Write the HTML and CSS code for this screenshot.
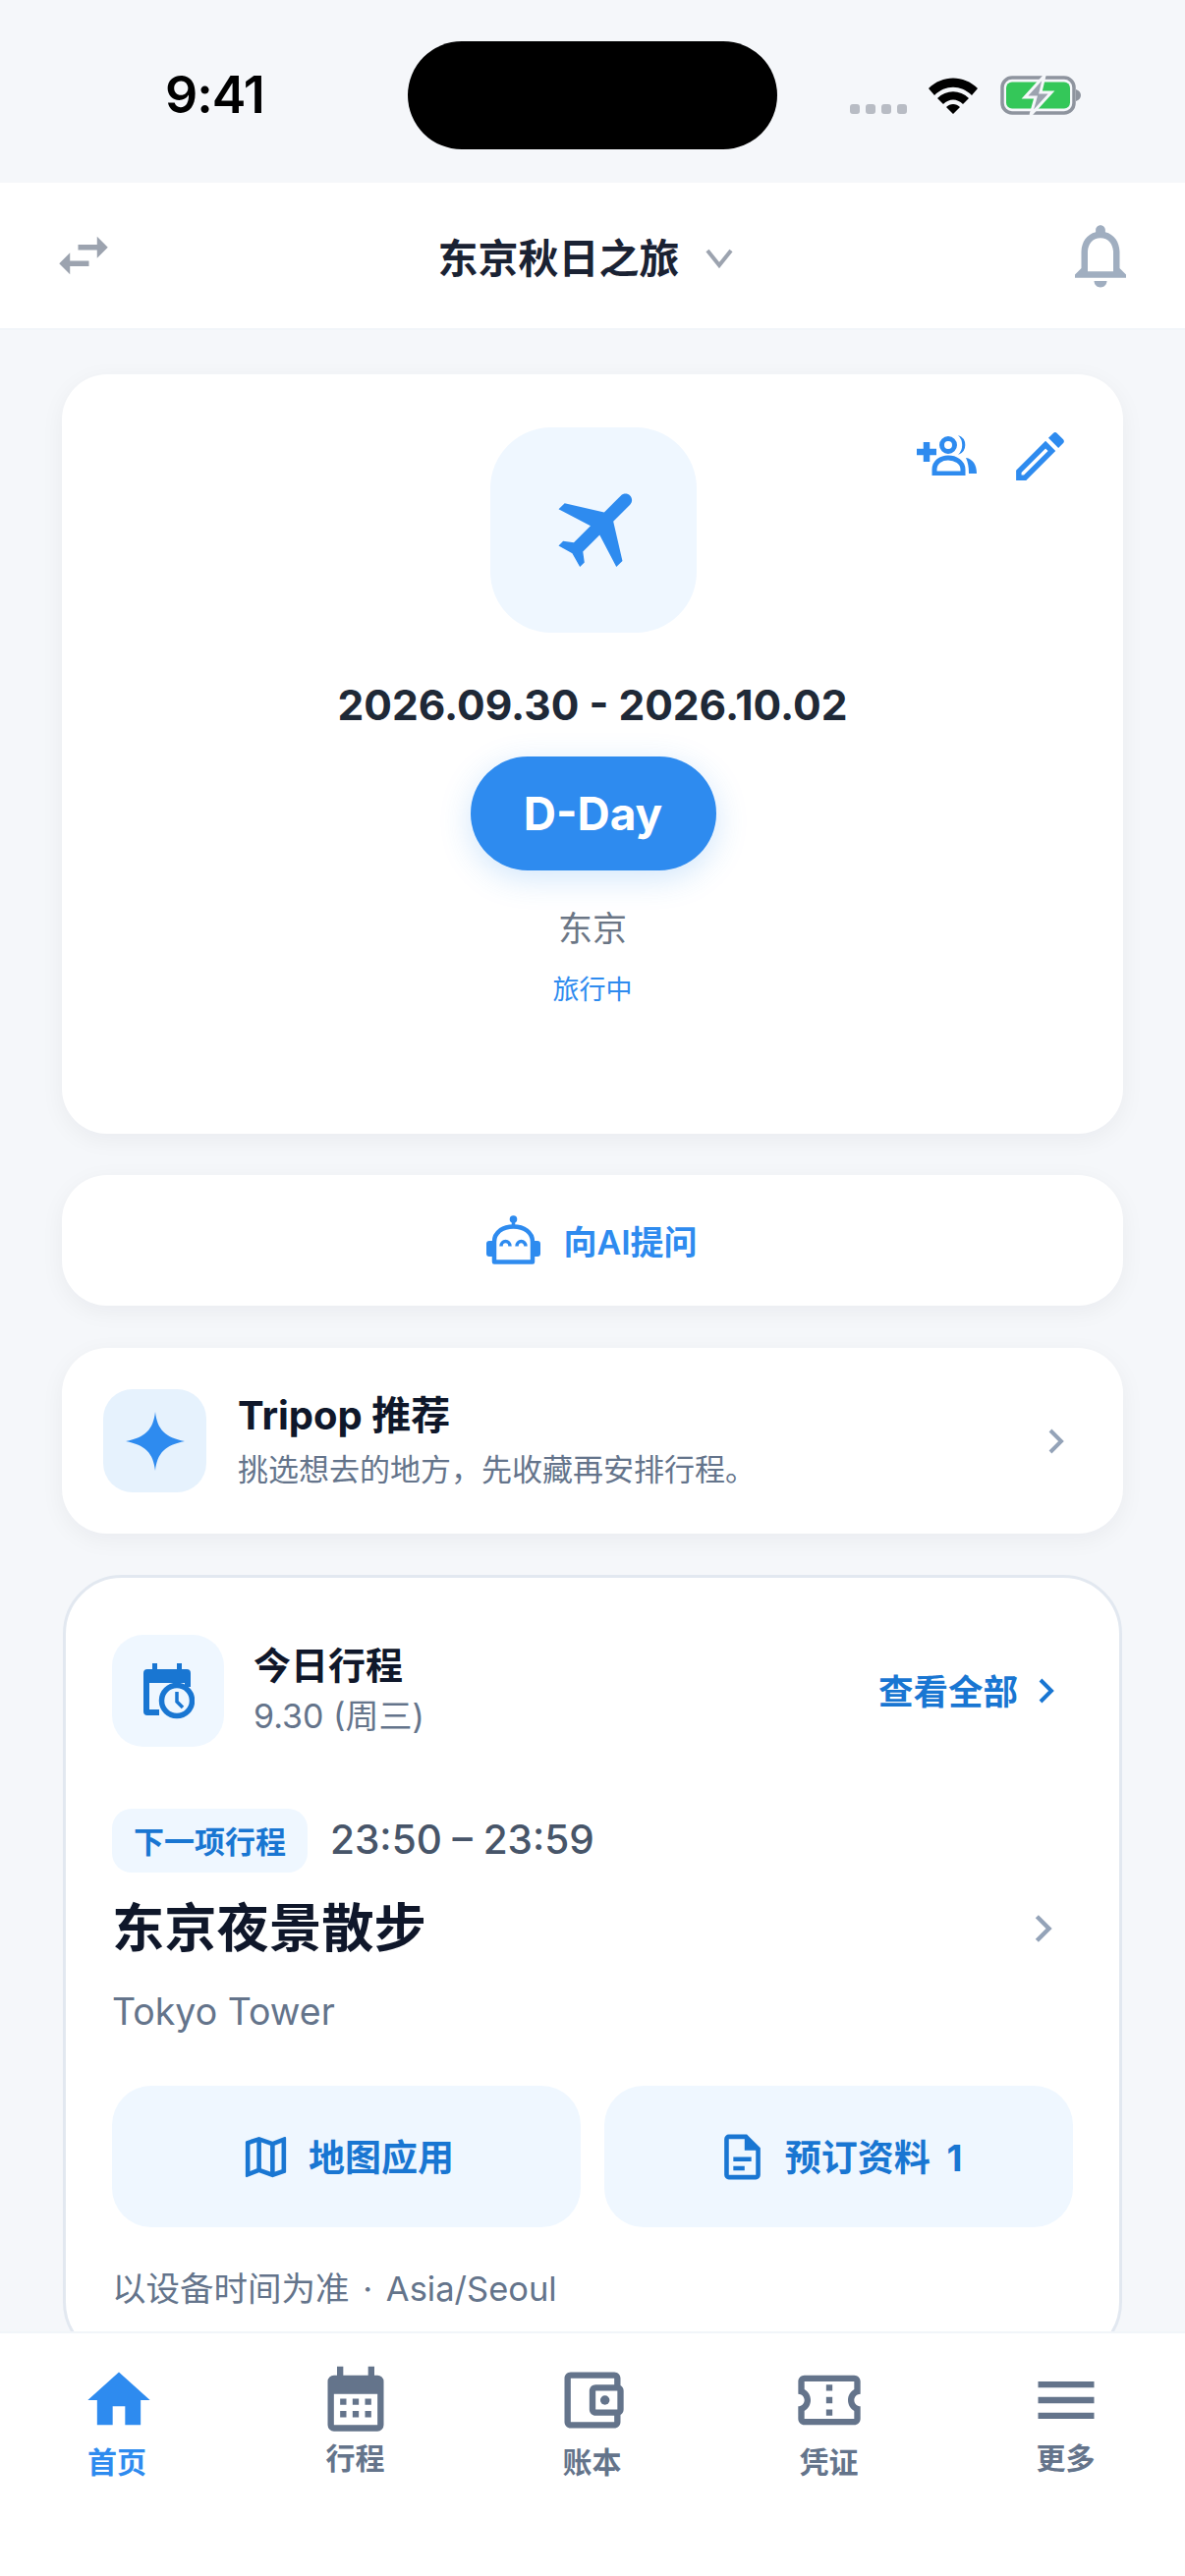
FILE: index.html
```html
<!DOCTYPE html>
<html lang="zh">
<head>
    <meta charset="utf-8">
    <title>Tripop</title>
    <link rel="stylesheet" href="styles.css">
</head>
<body>
<div class="phone">
    <div class="statusbar">
        <span class="clock">9:41</span>
        <span class="island"></span>
        <div class="status-icons">
            <span class="dots"><i></i><i></i><i></i><i></i></span>
            <svg class="wifi" viewBox="0 0 50 37"><path d="M0 11C14-3 36-3 50 11L44 18C33 7 17 7 6 18ZM9 21C18 12 32 12 41 21L35 27C29 21 21 21 15 27ZM18 30C22 26 28 26 32 30L25 37Z"/></svg>
            <svg class="battery" viewBox="0 0 82 40">
                <rect x="2" y="2" width="73" height="36" rx="10" fill="none" stroke="#8e949e" stroke-width="3.5"/>
                <rect x="6" y="6.500" width="65" height="27" rx="6" fill="#34c759"/>
                <path d="M77 14c3 1 5 3 5 6s-2 5-5 6z" fill="#8e949e"/>
                <path d="M45 0 25 22h11l-5 18 21-23H41z" fill="#9ca3af" stroke="#f5f7fa" stroke-width="3"/>
            </svg>
        </div>
    </div>

    <header class="topbar">
        <svg class="swap" viewBox="0 0 24 24"><path d="M6.99 11L3 15l3.99 4v-3H14v-2H6.99v-3zM21 9l-3.99-4v3H10v2h7.01v3L21 9z"/></svg>
        <div class="trip-select">
            <span class="trip-name">东京秋日之旅</span>
            <svg class="caret" viewBox="0 0 28 20"><path d="M2 2l12 15L26 2" fill="none" stroke="#9ca3af" stroke-width="4"/></svg>
        </div>
        <svg class="bell" viewBox="0 0 24 24"><path d="M12 22c1.100 0 2-.9 2-2h-4c0 1.100.9 2 2 2zm6-6v-5c0-3.070-1.630-5.640-4.500-6.320V4c0-.83-.67-1.500-1.500-1.500s-1.500.67-1.500 1.500v.68C7.640 5.360 6 7.920 6 11v5l-2 2v1h16v-1l-2-2zm-2 1H8v-6c0-2.480 1.510-4.500 4-4.500s4 2.020 4 4.500v6z"/></svg>
    </header>

    <main class="content">
        <section class="card hero">
            <div class="hero-actions">
                <svg class="add-member" viewBox="0 0 66 42">
                    <path d="M3 18h20M13 8v20" stroke="#2e8bef" stroke-width="6.500" fill="none"/>
                    <circle cx="35" cy="11" r="6.500" fill="none" stroke="#2e8bef" stroke-width="5"/>
                    <path d="M45 1a10.500 10.500 0 0 1 0 20 14 14 0 0 0 0-20z" fill="#2e8bef"/>
                    <path d="M21 40V36C21 28 28 24 35 24S50 28 50 36V40z" fill="none" stroke="#2e8bef" stroke-width="5"/>
                    <path d="M53 24C60 25 64 31 64 40H56C56 33 55 28 53 24z" fill="#2e8bef"/>
                </svg>
                <svg class="edit" viewBox="0 0 24 24"><path d="M3 17.250V21h3.750L17.810 9.940l-3.750-3.750L3 17.250zM5.920 19H5v-.92l9.060-9.060.92.92L5.920 19zM20.710 5.630l-2.340-2.340c-.39-.39-1.020-.39-1.410 0l-1.830 1.830 3.750 3.750 1.830-1.830c.39-.39.39-1.020 0-1.410z"/></svg>
            </div>
            <div class="hero-icon">
                <svg viewBox="0 0 24 24"><path transform="translate(1.900 -0.600) rotate(45 12 12)" d="M21 16v-2l-8-5V3.500c0-.83-.67-1.500-1.500-1.500S10 2.670 10 3.500V9l-8 5v2l8-2.500V19l-2 1.500V22l3.500-1 3.500 1v-1.500L13 19v-5.500l8 2.500z"/></svg>
            </div>
            <div class="hero-dates">2026.09.30 - 2026.10.02</div>
            <div class="dday">D-Day</div>
            <div class="hero-city">东京</div>
            <div class="hero-state">旅行中</div>
        </section>

        <section class="card ask">
            <svg class="robot" viewBox="0 0 57 50">
                <circle cx="28.500" cy="4" r="3.800" fill="#2e8bef"/>
                <path d="M28.500 6v6" stroke="#2e8bef" stroke-width="3.500"/>
                <path d="M9 27C9 17 18 11.500 28.500 11.500S48 17 48 27V47.500H9z" fill="none" stroke="#2e8bef" stroke-width="4.500" stroke-linejoin="round"/>
                <path d="M9 26H4a3 3 0 0 0-3 3v10a3 3 0 0 0 3 3h5zM48 26h5a3 3 0 0 1 3 3v10a3 3 0 0 1-3 3h-5z" fill="#2e8bef"/>
                <path d="M16 31.500a4.500 5 0 0 1 9 0M32 31.500a4.500 5 0 0 1 9 0" fill="none" stroke="#2e8bef" stroke-width="3.500"/>
            </svg>
            <span class="ask-label">向AI提问</span>
        </section>

        <section class="card picks">
            <div class="picks-icon">
                <svg viewBox="0 0 60 60"><path d="M30 0C32 18 40 26 60 30 40 34 32 42 30 60 28 42 20 34 0 30 20 26 28 18 30 0Z"/></svg>
            </div>
            <div class="picks-text">
                <div class="picks-title">Tripop 推荐</div>
                <div class="picks-sub">挑选想去的地方，先收藏再安排行程。</div>
            </div>
            <svg class="chevron picks-more" viewBox="0 0 18 28"><path d="M3 3l11 11L3 25"/></svg>
        </section>

        <section class="card today">
            <div class="today-head">
                <div class="today-icon">
                    <svg viewBox="0 0 52 58">
                        <path d="M4 7h5V1h5v6h20V1h5v6h5a4 4 0 0 1 4 4v14h-6V21H6v27h10v6H4a4 4 0 0 1-4-4V11a4 4 0 0 1 4-4z" fill="#1976d2"/>
                        <circle cx="34" cy="39" r="15.500" fill="#eff7ff" stroke="#1976d2" stroke-width="5.500"/>
                        <path d="M34 30v10l6 6" fill="none" stroke="#1976d2" stroke-width="3.500"/>
                    </svg>
                </div>
                <div class="today-text">
                    <div class="today-title">今日行程</div>
                    <div class="today-date">9.30 (周三)</div>
                </div>
                <div class="see-all">
                    <span>查看全部</span>
                    <svg class="chevron" viewBox="0 0 18 28"><path d="M3 3l11 11L3 25"/></svg>
                </div>
            </div>

            <div class="next-row">
                <span class="next-badge">下一项行程</span>
                <span class="next-time">23:50 – 23:59</span>
            </div>
            <div class="event-row">
                <h2 class="event-title">东京夜景散步</h2>
                <svg class="chevron event-more" viewBox="0 0 18 28"><path d="M3 3l11 11L3 25"/></svg>
            </div>
            <div class="event-place">Tokyo Tower</div>

            <div class="event-buttons">
                <div class="event-button">
                    <svg viewBox="0 0 24 24"><path d="M20.500 3l-.16.03L15 5.100 9 3 3.360 4.900c-.21.07-.36.25-.36.48V20.500c0 .28.22.5.5.5l.16-.03L9 18.900l6 2.100 5.640-1.900c.21-.07.36-.25.36-.48V3.500c0-.28-.22-.5-.5-.5zM10 5.470l4 1.400v11.660l-4-1.400V5.470zm-5 .99l3-1.010v11.700l-3 1.160V6.460zm14 11.080l-3 1.010V6.860l3-1.160v11.840z"/></svg>
                    <span>地图应用</span>
                </div>
                <div class="event-button">
                    <svg viewBox="0 0 24 24"><path fill-rule="evenodd" d="M14 2H6a2 2 0 0 0-2 2v16a2 2 0 0 0 2 2h12a2 2 0 0 0 2-2V8zM6 4h7v5h5v11H6z"/><path d="M8 12h8v2H8zM8 16h5v2H8z"/></svg>
                    <span>预订资料 1</span>
                </div>
            </div>
            <div class="today-note">以设备时间为准 · Asia/Seoul</div>
        </section>
    </main>

    <nav class="tabbar">
        <div class="tab active">
            <svg viewBox="0 0 24 24"><path d="M10 20v-6h4v6h5v-8h3L12 3 2 12h3v8z"/></svg>
            <span>首页</span>
        </div>
        <div class="tab tight">
            <svg viewBox="0 0 24 24"><path fill-rule="evenodd" d="M19 4h-1V1.200h-2V4H8V1.200H6V4H5a2 2 0 0 0-2 2v14a2 2 0 0 0 2 2h14a2 2 0 0 0 2-2V6a2 2 0 0 0-2-2zM5 10h14v10H5z"/><path d="M7 11.500h2v2H7zM11 11.500h2v2h-2zM15 11.500h2v2h-2zM7 15.500h2v2H7zM11 15.500h2v2h-2zM15 15.500h2v2h-2z"/></svg>
            <span>行程</span>
        </div>
        <div class="tab">
            <svg viewBox="0 0 24 24"><path d="M21 7.280V5c0-1.100-.9-2-2-2H5c-1.110 0-2 .9-2 2v14c0 1.100.89 2 2 2h14c1.100 0 2-.9 2-2v-2.280c.59-.35 1-.98 1-1.720V9c0-.74-.41-1.380-1-1.720zM20 9v6h-7V9h7zM5 19V5h14v2h-6c-1.100 0-2 .9-2 2v6c0 1.100.9 2 2 2h6v2H5z"/><circle cx="16" cy="12" r="1.500"/></svg>
            <span>账本</span>
        </div>
        <div class="tab">
            <svg viewBox="0 0 24 24"><path d="M22 10V6c0-1.110-.9-2-2-2H4c-1.100 0-1.990.89-1.990 2v4c1.100 0 1.990.9 1.990 2s-.89 2-2 2v4c0 1.100.9 2 2 2h16c1.100 0 2-.9 2-2v-4c-1.100 0-2-.9-2-2s.9-2 2-2zm-2-1.460c-1.190.69-2 1.990-2 3.460s.81 2.770 2 3.460V18H4v-2.540c1.190-.69 2-1.990 2-3.460 0-1.480-.8-2.770-1.990-3.460L4 6h16v2.540zM11 15h2v2h-2zm0-4h2v2h-2zm0-4h2v2h-2z"/></svg>
            <span>凭证</span>
        </div>
        <div class="tab tight">
            <svg viewBox="0 0 24 24"><path d="M3 18h18v-2H3v2zm0-5h18v-2H3v2zm0-7v2h18V6H3z"/></svg>
            <span>更多</span>
        </div>
    </nav>
</div>
</body>
</html>
```

FILE: styles.css
```css
* {
    box-sizing: border-box;
}

html, body {
    margin: 0;
    padding: 0;
}

body {
    font-family: Inter, "Noto Sans CJK SC", sans-serif;
    background: #f5f7fa;
    color: #0f172a;
}

svg {
    display: block;
    flex: none;
}

.phone {
    width: 1206px;
    height: 2622px;
    display: flex;
    flex-direction: column;
    overflow: hidden;
}

/* status bar */
.statusbar {
    height: 186px;
    flex: none;
    display: flex;
    padding-left: 168px;
    align-items: flex-start;
}

.clock {
    width: 247px;
    margin-top: 67px;
    font-size: 52px;
    line-height: 60px;
    font-weight: 600;
    letter-spacing: -1px;
    color: #000;
}

.island {
    width: 376px;
    height: 110px;
    margin-top: 42px;
    border-radius: 55px;
    background: #000;
}

.status-icons {
    display: flex;
    align-items: flex-end;
    height: 39px;
    margin-top: 78px;
    margin-left: 74px;
}

.dots {
    display: flex;
    gap: 6px;
    margin-bottom: 1px;
}

.dots i {
    width: 10px;
    height: 10px;
    border-radius: 3px;
    background: #b8bcc4;
}

.wifi {
    width: 50px;
    height: 37px;
    margin-left: 22px;
    margin-bottom: 1px;
}

.battery {
    width: 82px;
    height: 40px;
    margin-left: 23px;
}

/* top bar */
.topbar {
    height: 150px;
    flex: none;
    display: flex;
    align-items: center;
    justify-content: space-between;
    padding: 0 47px 0 52px;
    background: #fff;
    border-bottom: 2px solid #f1f5f9;
}

.swap {
    width: 66px;
    height: 66px;
    fill: #9ca3af;
}

.bell {
    width: 78px;
    height: 78px;
    fill: #a0aec0;
}

.trip-select {
    display: flex;
    align-items: center;
    gap: 26px;
    margin-right: 8px;
    margin-top: 5px;
}

.trip-name {
    font-size: 41px;
    font-weight: 700;
    line-height: 56px;
    color: #1a2233;
}

.caret {
    width: 28px;
    height: 20px;
}

/* cards */
.content {
    flex: 1;
    min-height: 0;
    overflow: hidden;
    padding: 45px 63px 0;
    display: flex;
    flex-direction: column;
    gap: 42px;
}

.card {
    flex: none;
    background: #fff;
    border-radius: 46px;
    box-shadow: 0 6px 24px rgba(15, 23, 42, 0.05);
}

.hero {
    position: relative;
    height: 773px;
    padding-top: 54px;
    display: flex;
    flex-direction: column;
    align-items: center;
}

.hero-actions {
    position: absolute;
    top: 51px;
    right: 52px;
    display: flex;
    align-items: center;
    gap: 30px;
}

.add-member {
    width: 66px;
    height: 42px;
    margin-top: -3px;
}

.edit {
    width: 65px;
    height: 65px;
    fill: #2e8bef;
}

.hero-icon {
    width: 210px;
    height: 209px;
    margin-left: 1px;
    border-radius: 62px;
    background: #eff7ff;
    display: flex;
    align-items: center;
    justify-content: center;
}

.hero-icon svg {
    width: 105px;
    height: 105px;
    fill: #2e8bef;
}

.hero-dates {
    margin-top: 45px;
    font-size: 42.500px;
    line-height: 58px;
    font-weight: 700;
    color: #1f2937;
}

.dday {
    width: 250px;
    height: 116px;
    margin-top: 23px;
    margin-left: 1px;
    border-radius: 58px;
    background: #2e8bef;
    color: #fff;
    font-size: 46px;
    font-weight: 700;
    display: flex;
    align-items: center;
    justify-content: center;
    box-shadow: 0 8px 32px rgba(46, 139, 239, 0.22);
}

.hero-city {
    margin-top: 34px;
    font-size: 35px;
    line-height: 50px;
    color: #6b7685;
}

.hero-state {
    margin-top: 20px;
    font-size: 27px;
    line-height: 36px;
    color: #2e8bef;
}

.ask {
    height: 133px;
    display: flex;
    align-items: center;
    justify-content: center;
    gap: 22px;
    padding-right: 2px;
}

.robot {
    width: 57px;
    height: 50px;
    margin-top: -1px;
}

.ask-label {
    font-size: 34px;
    font-weight: 600;
    color: #2e8bef;
}

.picks {
    height: 189px;
    margin-top: 1px;
    display: flex;
    align-items: center;
    padding: 0 59px 0 42px;
}

.picks-icon {
    width: 105px;
    height: 105px;
    border-radius: 30px;
    background: #e6f2fd;
    display: flex;
    align-items: center;
    justify-content: center;
}

.picks-icon svg {
    width: 60px;
    height: 60px;
    fill: #2e8bef;
}

.picks-text {
    margin-left: 32px;
}

.picks-title {
    font-size: 40px;
    line-height: 52px;
    font-weight: 700;
}

.picks-sub {
    margin-top: 6px;
    font-size: 31px;
    line-height: 46px;
    color: #64748b;
}

.chevron {
    width: 18px;
    height: 28px;
}

.chevron path {
    fill: none;
    stroke: currentColor;
    stroke-width: 4;
}

.picks-more {
    margin-left: auto;
    color: #94a3b8;
}

.today {
    margin: 0 1px;
    padding: 58px 47px 47px;
    border: 3px solid #e2e8f0;
    border-radius: 60px;
    box-shadow: none;
}

.today-head {
    display: flex;
    align-items: center;
}

.today-icon {
    width: 114px;
    height: 114px;
    border-radius: 32px;
    background: #eff7ff;
    padding-left: 2px;
    display: flex;
    align-items: center;
    justify-content: center;
}

.today-icon svg {
    width: 52px;
    height: 58px;
}

.today-text {
    margin-left: 30px;
    padding-bottom: 4px;
}

.today-title {
    font-size: 38px;
    line-height: 52px;
    font-weight: 700;
}

.today-date {
    margin-top: 3px;
    font-size: 34px;
    line-height: 46px;
    color: #64748b;
}

.see-all {
    margin-left: auto;
    padding-right: 18px;
    display: flex;
    align-items: center;
    gap: 20px;
    font-size: 35.500px;
    font-weight: 600;
    color: #1976d2;
}

.see-all span {
    margin-bottom: 4px;
}

.next-row {
    margin-top: 63px;
    display: flex;
    align-items: center;
    gap: 23px;
}

.next-badge {
    width: 199px;
    height: 65px;
    border-radius: 20px;
    background: #eff7ff;
    color: #1976d2;
    font-size: 31px;
    font-weight: 600;
    display: flex;
    align-items: center;
    justify-content: center;
    padding-bottom: 2px;
}

.next-time {
    margin-bottom: 2px;
    font-size: 40.500px;
    font-weight: 500;
    color: #475569;
}

.event-row {
    margin-top: 22px;
    display: flex;
    align-items: center;
    justify-content: space-between;
    padding-right: 20px;
}

.event-title {
    margin: 0;
    font-size: 53.300px;
    line-height: 70px;
    font-weight: 700;
}

.event-more {
    width: 20px;
    height: 34px;
    color: #94a3b8;
}

.event-place {
    margin-top: 25px;
    font-size: 37.500px;
    line-height: 50px;
    color: #64748b;
}

.event-buttons {
    margin-top: 50px;
    display: grid;
    grid-template-columns: 1fr 1fr;
    gap: 24px;
}

.event-button {
    height: 144px;
    border-radius: 40px;
    background: #eff7ff;
    display: flex;
    align-items: center;
    justify-content: center;
    gap: 16px;
    color: #1976d2;
    font-size: 37px;
    font-weight: 700;
    word-spacing: 8px;
}

.event-button svg {
    width: 55px;
    height: 55px;
    fill: #1976d2;
}

.event-button span {
    margin-bottom: 3px;
}

.today-note {
    margin-top: 40px;
    font-size: 34.500px;
    word-spacing: 4px;
    line-height: 46px;
    color: #64748b;
}

/* bottom tabs */
.tabbar {
    height: 249px;
    flex: none;
    display: grid;
    grid-template-columns: repeat(5, 1fr);
    padding: 30px 1px 0 0;
    background: #fff;
    border-top: 2px solid #f1f5f9;
}

.tab {
    display: flex;
    flex-direction: column;
    align-items: center;
    color: #64748b;
    font-size: 30px;
    line-height: 36px;
    font-weight: 600;
}

.tab svg {
    width: 76px;
    height: 76px;
    fill: currentColor;
}

.tab span {
    margin-top: 7px;
}

.tab.tight span {
    margin-top: 3px;
}

.tab.active {
    color: #2e8bef;
    font-weight: 700;
}

.tab.active span {
    margin-right: 3px;
}
```
